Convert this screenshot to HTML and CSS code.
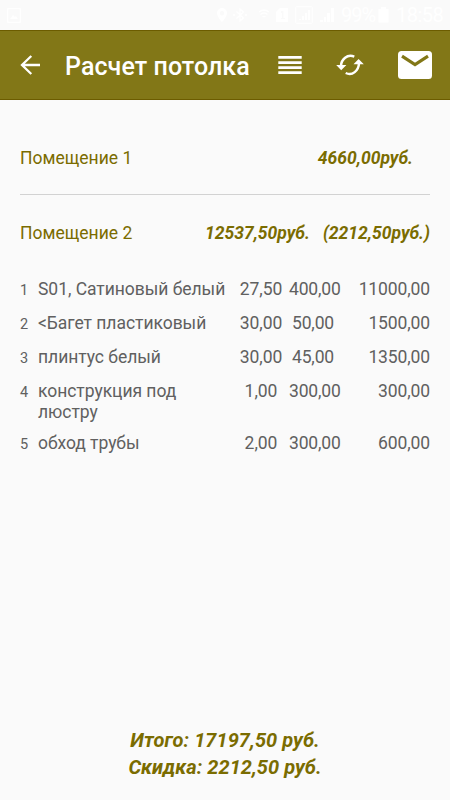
FILE: index.html
```html
<!DOCTYPE html>
<html lang="ru">
<head>
<meta charset="utf-8">
<title>Расчет потолка</title>
<link rel="stylesheet" href="styles.css">
</head>
<body>
<div class="status">
  <svg class="st-image" width="14" height="15" viewBox="0 0 14 15"><rect x=".7" y=".7" width="12.6" height="13.6" fill="none" stroke="#fff" stroke-width="1.2"/><path d="M3 11l3-4 2 2 1-1 2 3z" fill="#fff"/></svg>
  <div class="st-icons">
    <svg width="12" height="16" viewBox="0 0 12 16"><path fill="#fff" fill-rule="evenodd" d="M6 1a5 5 0 0 0-5 5c0 4 5 9 5 9s5-5 5-9a5 5 0 0 0-5-5zm0 3a2.200 2.200 0 1 1 0 4.400A2.200 2.200 0 0 1 6 4z"/></svg>
    <svg class="bt" width="14" height="16" viewBox="0 0 14 16"><path fill="none" stroke="#fff" stroke-width="1.300" d="M3.500 4.500l7 6.500L7 14V2l3.500 3-7 6.500M0 8h2M12 8h2"/></svg>
    <svg class="wifi" width="12" height="16" viewBox="0 0 12 16"><path fill="none" stroke="#fff" stroke-width="1.300" d="M1 5q5-4 10 0M2.500 7.500q3.500-3 7 0M4.500 10q1.500-1.200 3 0"/></svg>
    <svg class="sim" width="12" height="16" viewBox="0 0 12 16"><path fill="#fff" fill-rule="evenodd" d="M4 1h8v14H0V5zm1 3v2h1v5H5v1h4v-1H7.500V4z"/></svg>
    <svg class="sig1" width="18" height="18" viewBox="0 0 18 18"><rect x=".7" y=".7" width="16.600" height="16.600" rx="1" fill="none" stroke="#fff"/><path fill="#fff" d="M4 14v-1h2v1zM7 14v-4h2v4zM10 14V7h2v7zM13 14V4h2v10z"/></svg>
    <svg class="sig2" width="14" height="16" viewBox="0 0 14 16"><path fill="#fff" d="M0 15v-2h3v2zM4 15v-5h2v5zM7 15V6h3v9zM11 15V1h3v14z"/></svg>
  </div>
  <span class="pct">99%</span>
  <svg class="bat" width="11" height="16" viewBox="0 0 11 16"><path fill="#fff" d="M3 0h5v2h2.500v13.500H.5V2H3z"/></svg>
  <span class="clock">18:58</span>
</div>
<header class="bar">
  <svg class="back" width="20" height="20" viewBox="0 0 20 20"><path d="M11.300 1L2 10l9.300 9M2 10h18" fill="none" stroke="#fff" stroke-width="2.300"/></svg>
  <h1 class="title">Расчет потолка</h1>
  <svg class="menu" width="24" height="20" viewBox="0 0 24 20"><path fill="#fff" d="M.3 1h23.400v2.700H.3zM.3 6.200h23.400v2.700H.3zM.3 11.300h23.400V14H.3zM.3 16.300h23.400V19H.3z"/></svg>
  <svg class="sync" width="28" height="22" viewBox="0 0 28 22"><g fill="none" stroke="#fff" stroke-width="2.500"><path d="M5 11.500C5.500 5.500 11 -.3 18.300 2.600"/><path d="M23 9.500C22.500 16.500 16.500 22.300 9.700 19"/></g><path fill="#fff" d="M.2 11h10.200l-5.200 5.200zM17.500 10.300L22.600 5l5.200 5.300z"/></svg>
  <svg class="mail" width="34" height="28" viewBox="0 0 34 28"><rect width="34" height="28" rx="3.500" fill="#fff"/><path d="M4 5.200l13 8.300 13-8.300" fill="none" stroke="#827717" stroke-width="3.200"/></svg>
</header>
<main class="content">
  <section class="room first">
    <span class="name">Помещение 1</span>
    <span class="sum">4660,00руб.</span>
  </section>
  <section class="room">
    <span class="name">Помещение 2</span>
    <span class="sum">12537,50руб.</span>
    <span class="discount">(2212,50руб.)</span>
  </section>
  <div class="items">
    <div class="row"><span class="num">1</span><span class="label">S01, Сатиновый белый</span><span class="qty">27,50</span><span class="price">400,00</span><span class="total">11000,00</span></div>
    <div class="row"><span class="num">2</span><span class="label">&lt;Багет пластиковый</span><span class="qty">30,00</span><span class="price">50,00</span><span class="total">1500,00</span></div>
    <div class="row"><span class="num">3</span><span class="label">плинтус белый</span><span class="qty">30,00</span><span class="price">45,00</span><span class="total">1350,00</span></div>
    <div class="row"><span class="num">4</span><span class="label">конструкция под<br>люстру</span><span class="qty">1,00</span><span class="price">300,00</span><span class="total">300,00</span></div>
    <div class="row"><span class="num">5</span><span class="label">обход трубы</span><span class="qty">2,00</span><span class="price">300,00</span><span class="total">600,00</span></div>
  </div>
</main>
<footer class="totals">
  <div>Итого: 17197,50 руб.</div>
  <div>Скидка: 2212,50 руб.</div>
</footer>
</body>
</html>
```
FILE: styles.css
```css
* { box-sizing: border-box; }
body {
  margin: 0;
  height: 800px;
  display: flex;
  flex-direction: column;
  overflow: hidden;
  background: #fafafa;
  color: #606060;
  font-family: Roboto, "Noto Sans", sans-serif;
  font-size: 17.5px;
}
svg { display: block; flex: none; }
.status {
  height: 30px;
  display: flex;
  align-items: center;
  padding: 0 8px 0 7px;
  color: #fff;
  font-size: 20px;
}
.st-icons { display: flex; align-items: center; margin-left: auto; }
.bt { margin-left: 5px; }
.wifi { margin-left: 11px; }
.sim { margin-left: 6px; }
.sig1 { margin-left: 7px; }
.sig2 { margin-left: 7px; }
.pct { margin-left: 7px; width: 35px; letter-spacing: -1px; }
.bat { margin-left: 2px; }
.clock { margin-left: 7px; width: 46px; letter-spacing: -0.5px; }
.bar {
  height: 70px;
  display: flex;
  align-items: center;
  padding-left: 20px;
  background: #827717;
  border-top: 1px solid #6c5c00;
  border-bottom: 1px solid #6c5c00;
  color: #fff;
}
.title {
  width: 213px;
  margin: 3px 0 0 25px;
  font-size: 25px;
  line-height: 30px;
  font-weight: 500;
  letter-spacing: 0.08px;
  white-space: nowrap;
}
.sync { margin-left: 34px; }
.mail { margin-left: 34px; }
.content { flex: 1; padding: 20px 20px 0; }
.room {
  height: 75px;
  display: flex;
  align-items: center;
  color: #7a6c00;
}
.room.first { border-bottom: 1px solid #d2d2d2; padding: 2px 17px 0 0; }
.name { margin-right: auto; }
.sum, .discount { font-weight: 700; font-style: italic; }
.discount { margin-left: 13px; }
.items { padding-top: 9px; }
.row {
  display: grid;
  grid-template-columns: 18px 194px 58px 49px 91px;
  line-height: 21px;
  letter-spacing: -0.04px;
  margin-bottom: 13px;
}
.row:nth-child(4) { margin-bottom: 10px; }
.num { font-size: 14.5px; padding-top: 2px; line-height: 19px; }
.qty { text-align: center; }
.price { text-align: center; letter-spacing: -0.15px; margin-left: -1px; padding-right: 2px; }
.total { text-align: right; letter-spacing: -0.12px; }
.totals {
  height: 73px;
  text-align: center;
  color: #7a6c00;
  font-size: 20px;
  line-height: 27px;
  letter-spacing: 0.05px;
  font-weight: 700;
  font-style: italic;
}
```
